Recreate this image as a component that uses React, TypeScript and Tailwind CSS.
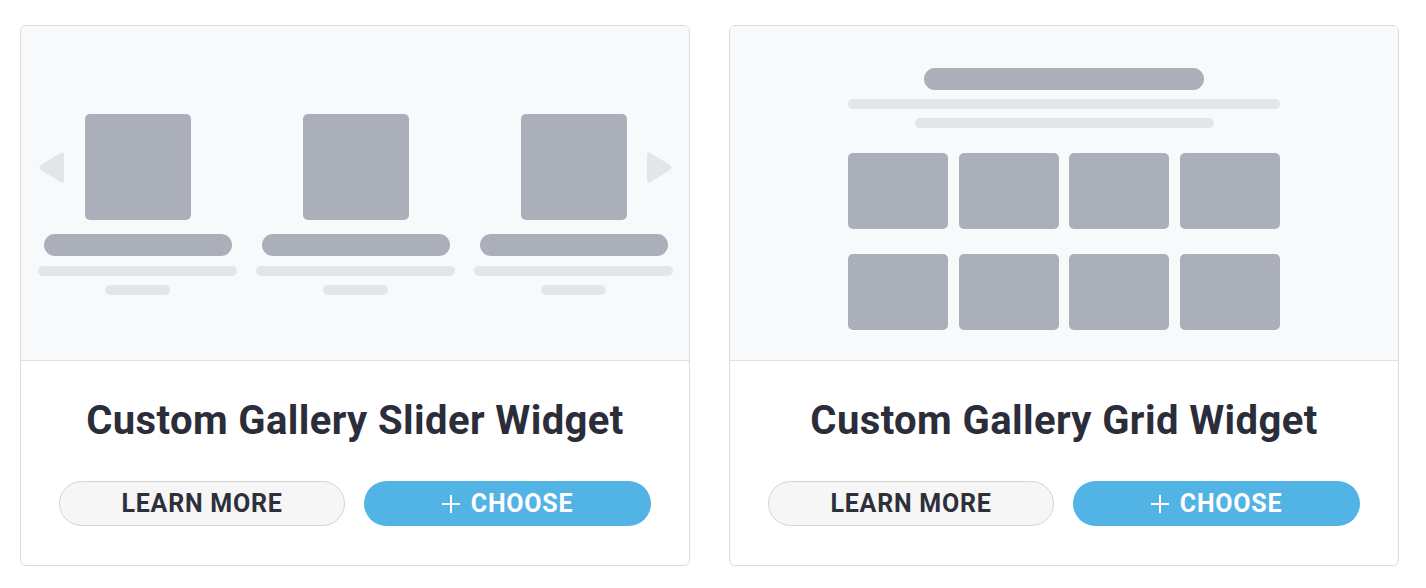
import React from 'react';

const font = { fontFamily: 'Roboto, "Noto Sans", sans-serif' };

function Arrow({ dir }: { dir: 'left' | 'right' }) {
    const d = dir === 'left' ? 'M26 3 L26 28 Q26 32 22.5 30 L3 18 Q0.5 15.5 3 13 L22.5 1 Q26 -1 26 3 Z' : 'M2 3 L2 28 Q2 32 5.5 30 L25 18 Q27.5 15.5 25 13 L5.5 1 Q2 -1 2 3 Z';
    return (
        <svg width="28" height="31" viewBox="0 0 28 31" className="block">
            <path d={d} fill="#e3e5ea" />
        </svg>
    );
}

function SliderPreview() {
    return (
        <div className="relative h-[335px] bg-[#f8f9fb] border-b border-[#dfdfe1]">
            <div className="absolute left-[17px] top-[126px]">
                <Arrow dir="left" />
            </div>
            <div className="absolute right-[16px] top-[126px]">
                <Arrow dir="right" />
            </div>
            <div className="flex gap-[19px] pl-[17px] pt-[88px]">
                {[0, 1, 2].map((i) => (
                    <div key={i} className="flex w-[199px] flex-col items-center">
                        <div className="h-[106px] w-[106px] rounded-[5px] bg-[#abafba]" />
                        <div className="mt-[14px] h-[22px] w-[188px] rounded-full bg-[#abafba]" />
                        <div className="mt-[10px] h-[10px] w-[199px] rounded-full bg-[#e3e5ea]" />
                        <div className="mt-[9px] h-[10px] w-[65px] rounded-full bg-[#e3e5ea]" />
                    </div>
                ))}
            </div>
        </div>
    );
}

function GridPreview() {
    return (
        <div className="flex h-[335px] flex-col items-center bg-[#f8f9fb] border-b border-[#dfdfe1] pt-[42px]">
            <div className="h-[22px] w-[280px] rounded-full bg-[#abafba]" />
            <div className="mt-[9px] h-[10px] w-[432px] rounded-full bg-[#e3e5ea]" />
            <div className="mt-[9px] h-[10px] w-[299px] rounded-full bg-[#e3e5ea]" />
            <div className="mt-[25px] grid w-[432px] grid-cols-4 gap-x-[10.6px] gap-y-[25px]">
                {Array.from({ length: 8 }).map((_, i) => (
                    <div key={i} className="h-[76px] rounded-[5px] bg-[#abafba]" />
                ))}
            </div>
        </div>
    );
}

function Card({ title, preview }: { title: string; preview: React.ReactNode }) {
    return (
        <div className="w-[670px] overflow-hidden rounded-[6px] border border-[#dcdcde] bg-white">
            {preview}
            <div className="flex h-[204px] flex-col items-center pt-[38px]" style={font}>
                <h2 className="text-[40px] font-bold leading-[44px] tracking-[0.01em] text-[#2b2d3a]">{title}</h2>
                <div className="mt-[38px] flex gap-[19px]">
                    <button className="flex h-[45px] w-[286px] items-center justify-center rounded-full border-[1.5px] border-[#d4d4d4] bg-[#f6f6f6] text-[25px] font-bold tracking-[0.03em] text-[#2d2f3b]">
                        LEARN MORE
                    </button>
                    <button className="flex h-[45px] w-[287px] items-center justify-center gap-[11px] rounded-full bg-[#52b3e5] text-[25px] font-bold tracking-[0.03em] text-white">
                        <svg width="18" height="18" viewBox="0 0 18 18" className="block">
                            <path d="M9 0 V18 M0 9 H18" stroke="#fff" strokeWidth="2" />
                        </svg>
                        CHOOSE
                    </button>
                </div>
            </div>
        </div>
    );
}

export default function App() {
    return (
        <div className="flex min-h-[588px] items-start gap-[39px] bg-white pl-[20px] pt-[25px]">
            <Card title="Custom Gallery Slider Widget" preview={<SliderPreview />} />
            <Card title="Custom Gallery Grid Widget" preview={<GridPreview />} />
        </div>
    );
}
